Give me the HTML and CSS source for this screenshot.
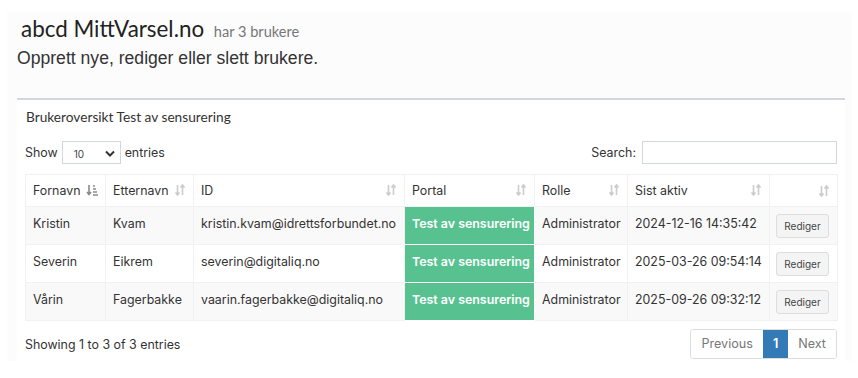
FILE: index.html
```html
<!DOCTYPE html>
<html lang="no">

<head>
    <meta charset="UTF-8">
    <title>Brukere</title>
    <link rel="stylesheet" href="styles.css">
</head>

<body>
    <div class="wrapper">
        <section class="page-head">
            <h1>abcd MittVarsel.no <small>har 3 brukere</small></h1>
            <p class="lead">Opprett nye, rediger eller slett brukere.</p>
        </section>

        <div class="box">
            <h3 class="box-title">Brukeroversikt Test av sensurering</h3>

            <div class="dt-top">
                <label class="dt-length">Show
                    <span class="select">10
                        <svg width="10" height="7" viewBox="0 0 10 7"><path d="M1 1.5l4 4 4-4" fill="none" stroke="#333" stroke-width="2"/></svg>
                    </span>
                    entries</label>
                <label class="dt-search">Search: <span class="input"></span></label>
            </div>

            <table class="dt">
                <thead>
                    <tr>
                        <th class="c1">Fornavn <svg class="sort active" width="12" height="12" viewBox="0 0 12 12"><path d="M3 1v9M1 8l2 2.5L5 8" fill="none" stroke="currentColor" stroke-width="1.6"/><path d="M7 2h2M7 5h3M7 8h4M7 11h5" stroke="currentColor" stroke-width="1.4"/></svg></th>
                        <th class="c2">Etternavn <svg class="sort" width="12" height="12" viewBox="0 0 12 12"><path d="M3.5 1v9.5M1.5 8.5l2 2.5 2-2.5M8.5 11V1.5M6.5 3.5l2-2.5 2 2.5" fill="none" stroke="currentColor" stroke-width="1.6"/></svg></th>
                        <th class="c3">ID <svg class="sort" width="12" height="12" viewBox="0 0 12 12"><path d="M3.5 1v9.5M1.5 8.5l2 2.5 2-2.5M8.5 11V1.5M6.5 3.5l2-2.5 2 2.5" fill="none" stroke="currentColor" stroke-width="1.6"/></svg></th>
                        <th class="c4">Portal <svg class="sort" width="12" height="12" viewBox="0 0 12 12"><path d="M3.5 1v9.5M1.5 8.5l2 2.5 2-2.5M8.5 11V1.5M6.5 3.5l2-2.5 2 2.5" fill="none" stroke="currentColor" stroke-width="1.6"/></svg></th>
                        <th class="c5">Rolle <svg class="sort" width="12" height="12" viewBox="0 0 12 12"><path d="M3.5 1v9.5M1.5 8.5l2 2.5 2-2.5M8.5 11V1.5M6.5 3.5l2-2.5 2 2.5" fill="none" stroke="currentColor" stroke-width="1.6"/></svg></th>
                        <th class="c6">Sist aktiv <svg class="sort" width="12" height="12" viewBox="0 0 12 12"><path d="M3.5 1v9.5M1.5 8.5l2 2.5 2-2.5M8.5 11V1.5M6.5 3.5l2-2.5 2 2.5" fill="none" stroke="currentColor" stroke-width="1.6"/></svg></th>
                        <th class="c7"><svg class="sort" width="12" height="12" viewBox="0 0 12 12"><path d="M3.5 1v9.5M1.5 8.5l2 2.5 2-2.5M8.5 11V1.5M6.5 3.5l2-2.5 2 2.5" fill="none" stroke="currentColor" stroke-width="1.6"/></svg></th>
                    </tr>
                </thead>
                <tbody>
                    <tr class="odd">
                        <td>Kristin</td>
                        <td>Kvam</td>
                        <td>kristin.kvam@idrettsforbundet.no</td>
                        <td class="portal">Test av sensurering</td>
                        <td>Administrator</td>
                        <td>2024-12-16 14:35:42</td>
                        <td class="act"><button>Rediger</button></td>
                    </tr>
                    <tr>
                        <td>Severin</td>
                        <td>Eikrem</td>
                        <td>severin@digitaliq.no</td>
                        <td class="portal">Test av sensurering</td>
                        <td>Administrator</td>
                        <td>2025-03-26 09:54:14</td>
                        <td class="act"><button>Rediger</button></td>
                    </tr>
                    <tr class="odd">
                        <td>Vårin</td>
                        <td>Fagerbakke</td>
                        <td>vaarin.fagerbakke@digitaliq.no</td>
                        <td class="portal">Test av sensurering</td>
                        <td>Administrator</td>
                        <td>2025-09-26 09:32:12</td>
                        <td class="act"><button>Rediger</button></td>
                    </tr>
                </tbody>
            </table>

            <div class="dt-bottom">
                <div class="dt-info">Showing 1 to 3 of 3 entries</div>
                <ul class="pager">
                    <li>Previous</li>
                    <li class="current">1</li>
                    <li>Next</li>
                </ul>
            </div>
        </div>
    </div>
</body>

</html>
```

FILE: styles.css
```css
body {
    margin: 0;
    background: #fff;
    color: #333;
    font-family: Inter, "Liberation Sans", sans-serif;
}

/* innholdsflate */
.wrapper {
    margin: 12px 6px 18px 7px;
    padding: 0 7px 0 10px;
    background: #fcfcfd;
    min-height: 348px;
}

.page-head h1 {
    margin: 0;
    padding: 2px 0 0 4px;
    font-family: Lato, "Open Sans", sans-serif;
    font-size: 22.4px;
    font-weight: 400;
    line-height: 30px;
    color: #222;
}

.page-head h1 small {
    font-size: 14.6px;
    color: #777;
    padding-left: 4px;
}

.lead {
    margin: 1px 0 0;
    font-family: "Liberation Sans", Arial, sans-serif;
    font-size: 17.6px;
    line-height: 20px;
    color: #333;
}

/* boks */
.box {
    margin-top: 30px;
    border-top: 2px solid #d2d6de;
    background: #fff;
    padding: 8px 8px 2px;
}

.box-title {
    margin: 0 0 0 1px;
    font-family: Lato, "Open Sans", sans-serif;
    font-size: 13.7px;
    font-weight: 400;
    line-height: 18px;
    color: #333;
}

.dt-top {
    display: flex;
    justify-content: space-between;
    align-items: center;
    margin-top: 15px;
    font-size: 12.4px;
}

.dt-top label {
    display: flex;
    align-items: center;
    gap: 4px;
}

.select {
    display: inline-flex;
    align-items: center;
    justify-content: space-between;
    width: 59px;
    height: 23px;
    box-sizing: border-box;
    padding: 2px 5px 0 11px;
    border: 1px solid #d2d6de;
    font-size: 10px;
    color: #444;
    background: #fff;
}

.input {
    display: inline-block;
    width: 195px;
    height: 23px;
    box-sizing: border-box;
    border: 1px solid #d2d6de;
    background: #fff;
    margin-left: 2px;
}

/* tabell */
.dt {
    width: 812px;
    table-layout: fixed;
    margin-top: 10px;
    border-collapse: collapse;
    font-size: 12.4px;
    color: #333;
    white-space: nowrap;
}

.dt th,
.dt td {
    box-sizing: border-box;
    border: 1px solid #f1f1f1;
    text-align: left;
    vertical-align: top;
}

.dt th {
    height: 32px;
    padding: 0 7px;
    font-weight: 400;
    vertical-align: middle;
}

.dt th .sort {
    float: right;
    color: #ccc;
    margin-top: 1px;
}

.dt th .sort.active {
    float: none;
    color: #8a8a8a;
    vertical-align: -1px;
    margin-left: 2px;
}

.c1 { width: 80px; }
.c2 { width: 88px; }
.c3 { width: 211px; }
.c4 { width: 130px; }
.c5 { width: 93px; }
.c6 { width: 142px; }
.c7 { width: 68px; }

.dt td {
    height: 38px;
    padding: 9px 7px 0;
    line-height: 16px;
}

.dt tr.odd td {
    background: #f9f9f9;
}

.dt tr td.portal {
    background: #57c290;
    color: #fff;
    font-weight: 600;
    border-color: #fff;
}

.dt td.act {
    padding: 7px 0 0 6px;
}

.dt button {
    font-family: inherit;
    font-size: 10px;
    color: #444;
    background: #f4f4f4;
    border: 1px solid #ddd;
    border-radius: 3px;
    width: 53px;
    height: 24px;
    padding: 0;
}

.dt-bottom {
    display: flex;
    justify-content: space-between;
    align-items: center;
    margin-top: 8px;
    font-size: 12.4px;
}

.pager {
    display: flex;
    list-style: none;
    margin: 0;
    padding: 0;
    border: 1px solid #ddd;
    border-radius: 3px;
    overflow: hidden;
}

.pager li {
    padding: 7px 10px;
    line-height: 14px;
    font-size: 12.6px;
    color: #777;
    background: #fff;
}

.pager li.current {
    background: #337ab7;
    color: #fff;
    font-weight: 600;
}
```
